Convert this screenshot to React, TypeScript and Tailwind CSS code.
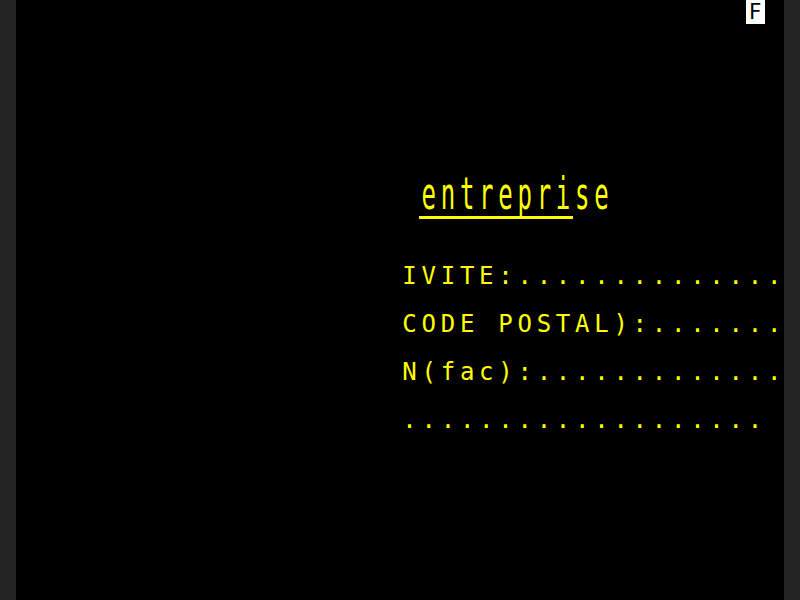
import React from 'react';

// One Minitel character cell: 19.2px wide (768px / 40 columns), 24px tall
const Cell: React.FC<{ ch: string }> = ({ ch }) => (
  <span className="inline-block w-[19.2px] shrink-0 text-center">{ch === ' ' ? '\u00a0' : ch}</span>
);

const Cells: React.FC<{ text: string }> = ({ text }) => (
  <>
    {text.split('').map((ch, i) => (
      <Cell key={i} ch={ch} />
    ))}
  </>
);

const fields = [
  { label: 'IVITE:', dots: 14 },
  { label: 'CODE POSTAL):', dots: 7 },
  { label: 'N(fac):', dots: 13 },
];

const App: React.FC = () => {
  return (
    <div className="flex h-[600px] w-[800px] bg-[#232323] overflow-hidden">
      <div
        className="mx-4 flex h-[600px] w-[768px] flex-col bg-black text-[24px] leading-[24px] text-[#ffff00]"
        style={{ fontFamily: '"DejaVu Sans Mono", "Liberation Mono", monospace' }}
      >
        {/* row 0: status indicator */}
        <div className="flex h-[24px] pl-[729.6px]">
          <span className="inline-block h-[24px] w-[19.2px] bg-white pt-[1px] text-center text-[21px] leading-[22px] text-black">F</span>
        </div>

        {/* rows 1-6 empty */}
        <div className="h-[144px]" />

        {/* rows 7-8: double-height title */}
        <div className="flex h-[48px] items-end pl-[403.2px]">
          <div className="flex h-[24px] origin-bottom scale-y-[1.85]">
            <Cells text="entreprise" />
          </div>
        </div>

        {/* row 9: underline */}
        <div className="flex h-[24px] pl-[403.2px]">
          <div className="h-[2.5px] w-[153.6px] bg-[#ffff00]" />
        </div>

        <div className="h-[24px]" />

        {fields.map((f) => (
          <React.Fragment key={f.label}>
            <div className="flex h-[24px] pl-[384px]">
              <Cells text={f.label + '.'.repeat(f.dots)} />
            </div>
            <div className="h-[24px]" />
          </React.Fragment>
        ))}

        {/* row 17: trailing dots */}
        <div className="flex h-[24px] pl-[384px]">
          <Cells text={'.'.repeat(19)} />
        </div>
      </div>
    </div>
  );
};

export default App;
